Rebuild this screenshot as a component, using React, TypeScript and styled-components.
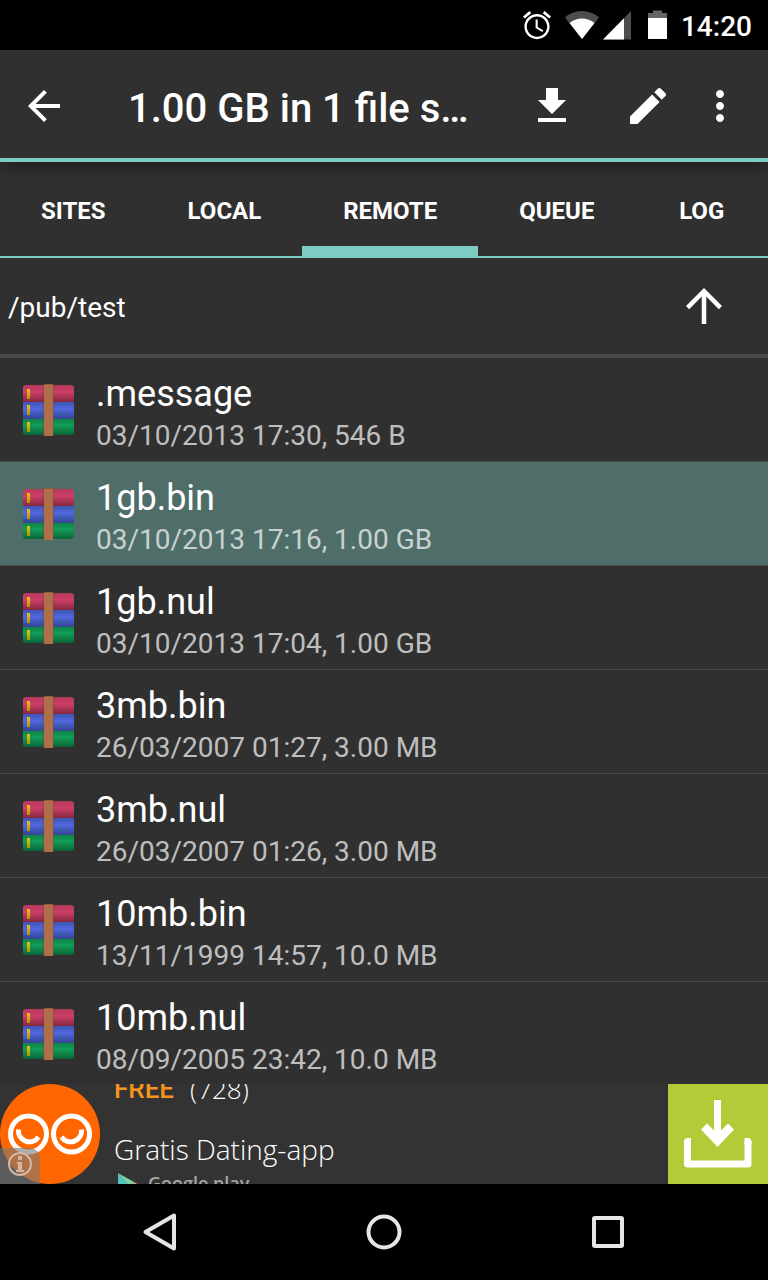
import React from "react";
import styled, { createGlobalStyle } from "styled-components";

const accent = "#80cbc4";

const GlobalStyle = createGlobalStyle`
  * { box-sizing: border-box; }
  body { margin: 0; background: #303030; }
  button { border: 0; padding: 0; background: none; color: inherit; font: inherit; cursor: pointer; }
  svg { display: block; flex: none; }
`;

const Screen = styled.div`
  display: flex;
  flex-direction: column;
  height: 100vh;
  background: #303030;
  color: #fff;
  font-family: Roboto, "Liberation Sans", sans-serif;
`;

const StatusBar = styled.div`
  flex: none;
  display: flex;
  align-items: center;
  justify-content: flex-end;
  height: 50px;
  padding-right: 16px;
  background: #000;
`;

const StatusIcons = styled.div`
  display: flex;
  align-items: center;
  margin-right: 13px;
`;

const Clock = styled.time`
  font-size: 28px;
  line-height: 32px;
  font-weight: 500;
  padding-top: 4px;
`;

const AppBar = styled.header`
  flex: none;
  display: flex;
  align-items: center;
  height: 112px;
  padding-right: 24px;
  box-shadow: inset 0 -4px ${accent}, 0 4px 16px rgba(0, 0, 0, 0.4);
`;

const IconButton = styled.button<{ $width: number }>`
  flex: none;
  display: flex;
  align-items: center;
  justify-content: center;
  width: ${(p) => p.$width}px;
  height: 96px;
`;

const Title = styled.h1`
  flex: 1;
  min-width: 0;
  margin: 0;
  padding: 6px 0 0 40px;
  overflow: hidden;
  white-space: nowrap;
  font-size: 40px;
  line-height: 48px;
  font-weight: 500;
`;

const Tabs = styled.nav`
  flex: none;
  display: flex;
  height: 96px;
  box-shadow: inset 0 -2px ${accent};
`;

const Tab = styled.button<{ $active?: boolean }>`
  && {
    flex: none;
    padding: 14px 41px 0;
    border-bottom: 12px solid ${(p) => (p.$active ? accent : "transparent")};
    font-size: 24px;
    line-height: 28px;
    font-weight: 700;
  }
  &&:last-child { flex: 1; }
`;

const PathBar = styled.div`
  flex: none;
  display: flex;
  align-items: center;
  justify-content: space-between;
  height: 100px;
  padding: 0 16px 0 8px;
  border-bottom: 4px solid #4a4a4a;
`;

const Path = styled.span`
  padding-top: 4px;
  font-size: 28px;
  line-height: 32px;
`;

const FileList = styled.ul`
  flex: 1;
  min-height: 0;
  margin: 0;
  padding: 0;
  overflow: hidden;
  list-style: none;
`;

const FileRow = styled.li<{ $selected?: boolean }>`
  display: flex;
  align-items: center;
  gap: 22px;
  height: 104px;
  padding-left: 22px;
  border-bottom: 1px solid #4a4a4a;
  background: ${(p) => (p.$selected ? "#4f6e6a" : "transparent")};
`;

const FileText = styled.div`
  padding-top: 8px;
`;

const FileName = styled.div`
  font-size: 36px;
  line-height: 44px;
`;

const FileInfo = styled.div`
  font-size: 28px;
  line-height: 40px;
  color: rgba(255, 255, 255, 0.7);
`;

const AdBanner = styled.aside`
  flex: none;
  position: relative;
  display: flex;
  height: 100px;
  overflow: hidden;
  background: #333;
  font-family: "Open Sans", sans-serif;
`;

const AdText = styled.div`
  flex: 1;
  display: flex;
  flex-direction: column;
  justify-content: center;
  padding-left: 14px;
`;

const AdRating = styled.div`
  flex: none;
  display: flex;
  gap: 16px;
  font-size: 26px;
  line-height: 72px;
  font-weight: 300;
`;

const Price = styled.span`
  color: #f7941d;
  font-family: Roboto, sans-serif;
  font-weight: 500;
`;

const AdTagline = styled.div`
  flex: none;
  font-size: 28px;
  line-height: 48px;
  font-weight: 300;
`;

const Store = styled.div`
  flex: none;
  display: flex;
  align-items: flex-start;
  gap: 6px;
  height: 42px;
  padding-left: 4px;
  color: #a6a6a6;
  font-size: 18px;
  line-height: 20px;
  font-weight: 600;
`;

const AdAction = styled.button`
  width: 100px;
  height: 100px;
  && { background: #b2cb39; }
`;

const AdInfo = styled.button`
  position: absolute;
  left: 0;
  bottom: 0;
  width: 40px;
  height: 36px;
  border-radius: 0 10px 0 0;
  && { background: rgba(120, 120, 120, 0.6); }
`;

const NavBar = styled.nav`
  flex: none;
  display: flex;
  justify-content: center;
  gap: 28px;
  height: 96px;
  background: #000;
`;

type IconProps = { d: string; size?: number };

const Icon = ({ d, size = 48 }: IconProps) => (
  <svg width={size} height={size} viewBox="0 0 24 24" fill="#fff" aria-hidden="true">
    <path d={d} />
  </svg>
);

const icons = {
  back: "M20 11H7.83l5.59-5.59L12 4l-8 8 8 8 1.41-1.41L7.83 13H20v-2z",
  download: "M19 9h-4V3H9v6H5l7 7 7-7zM5 18v2h14v-2H5z",
  edit: "M3 17.25V21h3.75L17.81 9.94l-3.75-3.75L3 17.25zM20.71 7.04c.39-.39.39-1.02 0-1.41l-2.34-2.34c-.39-.39-1.02-.39-1.41 0l-1.83 1.83 3.75 3.75 1.83-1.83z",
  more: "M12 8c1.1 0 2-.9 2-2s-.9-2-2-2-2 .9-2 2 .9 2 2 2zm0 2c-1.1 0-2 .9-2 2s.9 2 2 2 2-.9 2-2-.9-2-2-2zm0 6c-1.1 0-2 .9-2 2s.9 2 2 2 2-.9 2-2-.9-2-2-2z",
  up: "M4 12l1.41 1.41L11 7.83V20h2V7.83l5.58 5.59L20 12l-8-8-8 8z",
};

const StatusGlyphs = () => (
  <svg width="146" height="50" viewBox="522 0 146 50" fill="#fff" aria-hidden="true">
    <path
      transform="translate(520.2 8.4) scale(1.4)"
      d="M22 5.72l-4.6-3.86-1.29 1.53 4.6 3.86L22 5.72zM7.88 3.39L6.6 1.86 2 5.71l1.29 1.53 4.59-3.85zM12.5 8H11v6l4.75 2.85.75-1.23-4-2.37V8zM12 4c-4.97 0-9 4.03-9 9s4.02 9 9 9c4.97 0 9-4.03 9-9s-4.03-9-9-9zm0 16.3c-4 0-7.3-3.3-7.3-7.3s3.3-7.3 7.3-7.3 7.3 3.3 7.3 7.3-3.3 7.3-7.3 7.3z"
    />
    <path fill="#4d4d4d" d="M582 39L565 17.5Q572 11 582 11T599 17.5Z" />
    <path d="M582 39L569.500 23Q575 18.500 582 18.500T594.500 23Z" />
    <path fill="#4d4d4d" d="M603 39.500L631 11V39.500Z" />
    <path d="M603 39.500L624 18.200V39.500Z" />
    <path fill="#666" d="M648 18.500V13H653V10.500H662V13H667V18.500Z" />
    <path d="M648 18H667V39H648Z" />
  </svg>
);

const ArchiveIcon = () => (
  <svg width="52" height="52" viewBox="0 0 52 52" aria-hidden="true">
    <defs>
      <linearGradient id="bookRed" x2="0" y2="1">
        <stop offset="0" stopColor="#b53a5c" />
        <stop offset="0.4" stopColor="#cc3f68" />
        <stop offset="1" stopColor="#85283f" />
      </linearGradient>
      <linearGradient id="bookBlue" x2="0" y2="1">
        <stop offset="0" stopColor="#4157b5" />
        <stop offset="0.4" stopColor="#4e68de" />
        <stop offset="1" stopColor="#33458f" />
      </linearGradient>
      <linearGradient id="bookGreen" x2="0" y2="1">
        <stop offset="0" stopColor="#108548" />
        <stop offset="0.4" stopColor="#119c57" />
        <stop offset="1" stopColor="#0a6438" />
      </linearGradient>
      <linearGradient id="bookMark" x2="0" y2="1">
        <stop offset="0" stopColor="#efc40c" />
        <stop offset="1" stopColor="#b4920b" />
      </linearGradient>
      <pattern id="beltWeave" width="2" height="2" patternUnits="userSpaceOnUse">
        <rect width="2" height="2" fill="#b5744e" />
        <rect width="1" height="1" fill="#a86b48" />
        <rect x="1" y="1" width="1" height="1" fill="#a86b48" />
      </pattern>
    </defs>
    <path fill="url(#bookRed)" d="M4 1H49Q52 1 52 4V16Q52 18 50 18H3Q1 18 1 16V4Q1 1 4 1Z" />
    <rect x="1" y="18" width="51" height="17" rx="1" fill="url(#bookBlue)" />
    <path fill="url(#bookGreen)" d="M2 35H51Q52 35 52 36V48Q52 51 49 51H4Q1 51 1 48V36Q1 35 2 35Z" />
    <rect x="5" y="5" width="3" height="10" fill="url(#bookMark)" />
    <rect x="5" y="21" width="3" height="10" fill="url(#bookMark)" />
    <rect x="5" y="38" width="3" height="10" fill="url(#bookMark)" />
    <rect x="22" width="9" height="52" fill="url(#beltWeave)" />
    <path fill="#70452b" opacity="0.5" d="M22 0h9v1h-9zM21 0h1v52h-1zM31 0h1v52h-1z" />
  </svg>
);

const AdLogo = () => (
  <svg width="100" height="100" viewBox="0 0 100 100" fill="none" stroke="#fff" aria-hidden="true">
    <circle cx="50" cy="50" r="50" fill="#ff6600" stroke="none" />
    <circle cx="28.500" cy="50" r="18" strokeWidth="5" />
    <circle cx="71.500" cy="50" r="18" strokeWidth="5" />
    <path strokeWidth="5" d="M18.500 45.500A11 11 0 0 0 38.500 53" />
    <path strokeWidth="5" d="M81.500 45.500A11 11 0 0 1 61.500 53" />
  </svg>
);

const files = [
  { name: ".message", info: "03/10/2013 17:30, 546 B" },
  { name: "1gb.bin", info: "03/10/2013 17:16, 1.00 GB", selected: true },
  { name: "1gb.nul", info: "03/10/2013 17:04, 1.00 GB" },
  { name: "3mb.bin", info: "26/03/2007 01:27, 3.00 MB" },
  { name: "3mb.nul", info: "26/03/2007 01:26, 3.00 MB" },
  { name: "10mb.bin", info: "13/11/1999 14:57, 10.0 MB" },
  { name: "10mb.nul", info: "08/09/2005 23:42, 10.0 MB" },
];

const tabs = ["SITES", "LOCAL", "REMOTE", "QUEUE", "LOG"];

export default function App() {
  return (
    <Screen>
      <GlobalStyle />
      <StatusBar>
        <StatusIcons>
          <StatusGlyphs />
        </StatusIcons>
        <Clock>14:20</Clock>
      </StatusBar>
      <AppBar>
        <IconButton $width={88} aria-label="Back">
          <Icon d={icons.back} />
        </IconButton>
        <Title>1.00 GB in 1 file s…</Title>
        <IconButton $width={96} aria-label="Download">
          <Icon d={icons.download} />
        </IconButton>
        <IconButton $width={96} aria-label="Edit">
          <Icon d={icons.edit} />
        </IconButton>
        <IconButton $width={48} aria-label="More options">
          <Icon d={icons.more} />
        </IconButton>
      </AppBar>
      <Tabs>
        {tabs.map((tab) => (
          <Tab key={tab} $active={tab === "REMOTE"}>
            {tab}
          </Tab>
        ))}
      </Tabs>
      <PathBar>
        <Path>/pub/test</Path>
        <IconButton $width={96} aria-label="Parent folder">
          <Icon d={icons.up} size={54} />
        </IconButton>
      </PathBar>
      <FileList>
        {files.map((file) => (
          <FileRow key={file.name} $selected={file.selected}>
            <ArchiveIcon />
            <FileText>
              <FileName>{file.name}</FileName>
              <FileInfo>{file.info}</FileInfo>
            </FileText>
          </FileRow>
        ))}
      </FileList>
      <AdBanner>
        <AdLogo />
        <AdText>
          <AdRating>
            <Price>FREE</Price>
            <span>(728)</span>
          </AdRating>
          <AdTagline>Gratis Dating-app</AdTagline>
          <Store>
            <svg width="24" height="28" viewBox="0 0 24 28" aria-hidden="true">
              <path fill="#4fc3c8" d="M0 0L12 14L0 28Z" />
              <path fill="#7ed3a0" d="M0 0L16 9L12 14Z" />
              <path fill="#e8a08a" d="M16 9L24 14L16 19L12 14Z" />
              <path fill="#d9534f" d="M0 28L16 19L12 14Z" />
            </svg>
            Google play
          </Store>
        </AdText>
        <AdAction aria-label="Install">
          <svg width="100" height="100" viewBox="0 0 100 100" fill="none" stroke="#fff" aria-hidden="true">
            <path strokeWidth="7" d="M49.500 16V58" />
            <path fill="#fff" stroke="none" d="M33 45.500L39 39.500L49.500 50L60 39.500L66 45.500L49.500 63Z" />
            <path strokeWidth="7" strokeLinejoin="round" d="M19.500 57V80H80V57" />
            <path fill="#fff" stroke="none" d="M16 58Q16 54 20 54H23V60H16ZM83.500 58Q83.500 54 79.500 54H76.500V60H83.500Z" />
          </svg>
        </AdAction>
        <AdInfo aria-label="Ad information">
          <svg width="40" height="36" viewBox="0 0 40 36" fill="none" stroke="#d2b5a4" aria-hidden="true">
            <circle cx="20" cy="16" r="11" strokeWidth="2" />
            <path strokeWidth="4" d="M20 8V12M20 14V23" />
            <path strokeWidth="2" d="M17 15H21M16 23H24" />
          </svg>
        </AdInfo>
      </AdBanner>
      <NavBar>
        <IconButton $width={196} aria-label="System back">
          <svg width="40" height="40" viewBox="0 0 40 40" fill="none" stroke="#e6e6e6" strokeWidth="4" strokeLinejoin="round" aria-hidden="true">
            <path d="M34 3.500V36.500L5.500 20Z" />
          </svg>
        </IconButton>
        <IconButton $width={196} aria-label="Home">
          <svg width="40" height="40" viewBox="0 0 40 40" fill="none" stroke="#e6e6e6" strokeWidth="4" aria-hidden="true">
            <circle cx="20" cy="20" r="15.500" />
          </svg>
        </IconButton>
        <IconButton $width={196} aria-label="Recent apps">
          <svg width="40" height="40" viewBox="0 0 40 40" fill="none" stroke="#e6e6e6" strokeWidth="4" aria-hidden="true">
            <rect x="6" y="6" width="28" height="28" rx="1" />
          </svg>
        </IconButton>
      </NavBar>
    </Screen>
  );
}
